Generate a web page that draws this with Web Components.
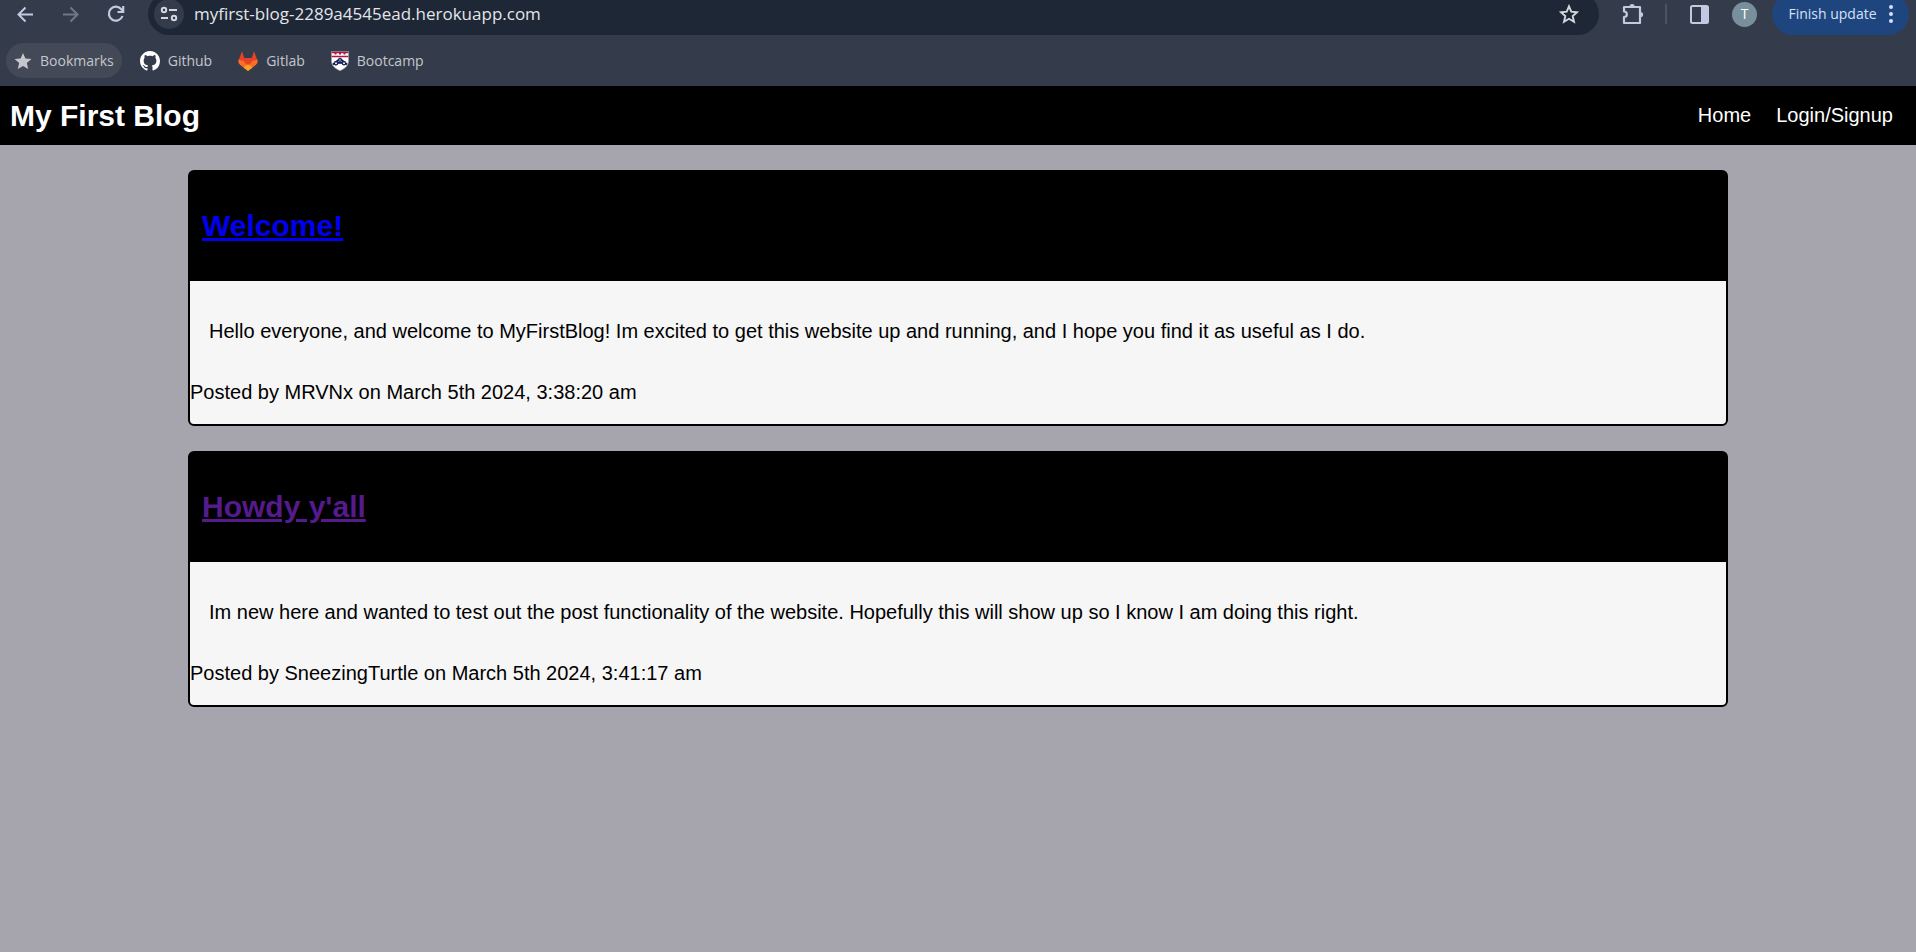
<!DOCTYPE html>
<html lang="en">
<head>
<meta charset="utf-8">
<title>My First Blog</title>
<style>
  body { margin: 0; min-height: 100vh; background: #a6a4ad; font-family: "Liberation Sans", Arial, sans-serif; font-size: 20px; line-height: 23px; color: #000; }
</style>
</head>
<body>
<browser-toolbar>
  <bookmark-link active label="Bookmarks">
    <svg slot="icon" width="18" height="18" viewBox="0 0 24 24" fill="#c4c7cb"><path d="M12 1.2l3.2 7.5 8.1.7-6.2 5.4 1.9 7.9-7-4.2-7 4.2 1.9-7.9L.7 9.400l8.100-.7z"/></svg>
  </bookmark-link>
  <bookmark-link label="Github">
    <svg slot="icon" width="20" height="20" viewBox="0 0 16 16" fill="#fff"><path d="M8 0C3.580 0 0 3.580 0 8c0 3.540 2.290 6.530 5.470 7.590.4.070.55-.17.55-.38 0-.19-.01-.82-.01-1.490-2.010.37-2.530-.49-2.690-.94-.09-.23-.48-.94-.82-1.130-.28-.15-.68-.52-.01-.53.63-.01 1.080.58 1.230.82.72 1.210 1.870.87 2.330.66.070-.52.280-.87.510-1.070-1.780-.2-3.640-.89-3.640-3.950 0-.87.310-1.590.82-2.150-.08-.2-.36-1.020.08-2.120 0 0 .67-.21 2.200.82.640-.18 1.320-.27 2-.27s1.360.09 2 .27c1.530-1.040 2.200-.82 2.200-.82.440 1.100.160 1.920.080 2.120.510.560.820 1.270.820 2.150 0 3.070-1.870 3.750-3.650 3.950.290.250.540.730.540 1.480 0 1.070-.010 1.930-.010 2.200 0 .210.150.460.550.380A8.010 8.010 0 0 0 16 8c0-4.420-3.580-8-8-8z"/></svg>
  </bookmark-link>
  <bookmark-link label="Gitlab">
    <svg slot="icon" width="20" height="20" viewBox="0 0 20 20"><path fill="#e24329" d="M4 .3L6.300 7h7.400L16 .3 19.500 9.500 10 18.500.5 9.500z"/><path fill="#fc6d26" d="M.7 8.500L6 10l4 4 4-4 5.300-1.500c.8 2 .2 4-1.500 5.400L10 19.800l-7.800-5.900C.5 12.500-.1 10.500.7 8.500z"/><path fill="#e24329" d="M5 8h10l-2 4-3 3-3-3z"/><path fill="#fca326" d="M10 13.200l4.500 3.300-4.500 3.400-4.500-3.400z"/></svg>
  </bookmark-link>
  <bookmark-link label="Bootcamp">
    <svg slot="icon" width="18" height="20" viewBox="0 0 18 20"><path fill="#fff" stroke="#8e93a3" stroke-width=".7" d="M.4.5h17.200v9c0 5-3.800 8.300-8.600 10.200C4.200 17.800.4 14.500.4 9.500z"/><path fill="#a8183f" d="M.8.8h16.400v1.400H.8zM.8 4.800h16.400v1.500H.8zM3.500 2h2v1.500h-2zM8 2h2v1.500H8zM12.500 2h2v1.500h-2z"/><path fill="none" stroke="#12205c" stroke-width="2" d="M2 13.500L9 7.800l7 5.700"/><g fill="#fff" stroke="#12205c" stroke-width="1.300"><circle cx="9" cy="9" r="1.400"/><circle cx="5" cy="12.300" r="1.600"/><circle cx="13" cy="12.300" r="1.600"/></g><path fill="#12205c" d="M7 11h4v1.800H7z"/></svg>
  </bookmark-link>
</browser-toolbar>
<blog-header heading="My First Blog">
  <a href="#home">Home</a>
  <a href="#login">Login/Signup</a>
</blog-header>
<post-list>
  <blog-post>
    <a slot="title" href="#welcome">Welcome!</a>
    Hello everyone, and welcome to MyFirstBlog! Im excited to get this website up and running, and I hope you find it as useful as I do.
    <span slot="meta">Posted by MRVNx on March 5th 2024, 3:38:20 am</span>
  </blog-post>
  <blog-post read>
    <a slot="title" href="#howdy">Howdy y'all</a>
    Im new here and wanted to test out the post functionality of the website. Hopefully this will show up so I know I am doing this right.
    <span slot="meta">Posted by SneezingTurtle on March 5th 2024, 3:41:17 am</span>
  </blog-post>
</post-list>

<template id="toolbar-template">
  <style>
    :host { display: block; background: #343c4c; color: #c2c9e0; font-family: "Open Sans", "Noto Sans", sans-serif; overflow: hidden; }
    .row { display: flex; align-items: center; height: 42px; margin-top: -7px; padding: 0 7px 0 8px; }
    button { border: 0; padding: 0; background: none; color: inherit; font: inherit; display: flex; align-items: center; justify-content: center; flex: none; width: 35px; height: 35px; }
    .nav { display: flex; gap: 10px; margin-right: 15px; }
    .nav button:disabled { color: #717785; }
    .address { flex: 1; display: flex; align-items: center; height: 42px; border-radius: 21px; background: #1e2736; padding: 0 15px 0 6px; }
    .address button { width: 30px; height: 30px; border-radius: 15px; color: #d4d7dd; }
    .address .site { background: #343c4c; }
    input { flex: 1; min-width: 0; border: 0; padding: 0; margin: 0 10px; height: 24px; background: none; color: #e3e5ea; font: 17px/24px "Open Sans", "Noto Sans", sans-serif; outline: 0; }
    .tools { display: flex; align-items: center; gap: 15px; margin-left: 16px; }
    .divider { width: 2px; height: 20px; background: #4c5361; }
    .tools .avatar { width: 25px; height: 25px; border-radius: 50%; background: #78909c; color: #fff; font-size: 14px; line-height: 20px; }
    .tools .update { width: 137px; height: 42px; border-radius: 21px; background: #1f457f; color: #d3e1fb; font-size: 14px; line-height: 20px; gap: 12px; }
    .bookmarks { display: flex; gap: 10px; padding: 8px 6px; }
  </style>
  <div class="row">
    <div class="nav">
      <button aria-label="Back"><svg width="17" height="17" viewBox="0 0 17 17" fill="none" stroke="currentColor" stroke-width="2"><path d="M16 8.500H2M8.500 1.500l-7 7 7 7"/></svg></button>
      <button aria-label="Forward" disabled><svg width="17" height="17" viewBox="0 0 17 17" fill="none" stroke="currentColor" stroke-width="2"><path d="M1 8.500h14M8.500 1.500l7 7-7 7"/></svg></button>
      <button aria-label="Reload"><svg width="18" height="18" viewBox="0 0 18 18" fill="none" stroke="currentColor" stroke-width="2.200"><path d="M15.500 11A7 7 0 1 1 14.500 4.500L16 6.300M16.200 1v6H10.500"/></svg></button>
    </div>
    <div class="address">
      <button class="site" aria-label="Site information"><svg width="18" height="16" viewBox="0 0 18 16" fill="none" stroke="currentColor" stroke-width="2"><circle cx="4" cy="4" r="2.200"/><path d="M9 4h8M1 12h7"/><circle cx="14" cy="12" r="2.200"/></svg></button>
      <input type="text" aria-label="Address" value="myfirst-blog-2289a4545ead.herokuapp.com">
      <button aria-label="Bookmark this page"><svg width="20" height="20" viewBox="0 0 20 20" fill="none" stroke="currentColor" stroke-width="1.900"><path d="M10 2.300l2.300 5.400 5.800.5-4.400 3.900 1.300 5.700-5-3-5 3 1.300-5.700-4.400-3.900 5.800-.5z"/></svg></button>
    </div>
    <div class="tools">
      <button aria-label="Extensions"><svg width="22" height="22" viewBox="0 0 22 22" fill="none" stroke="currentColor" stroke-width="2.200" stroke-linejoin="round"><path d="M2 4h16v16H2v-6c3.800 0 3.800-5.500 0-5.500z"/><path fill="currentColor" stroke="none" d="M7.500 3.500a2.600 2.600 0 0 1 5.200 0zM18.500 9a2.600 2.600 0 0 1 0 5.200z"/></svg></button>
      <span class="divider"></span>
      <button aria-label="Side panel"><svg width="19" height="19" viewBox="0 0 19 19"><rect x="1" y="1" width="17" height="17" rx="1.500" fill="none" stroke="currentColor" stroke-width="2"/><path fill="currentColor" d="M11 1h7v17h-7z"/></svg></button>
      <button class="avatar" aria-label="Profile">T</button>
      <button class="update">Finish update <svg width="4" height="18" viewBox="0 0 4 18" fill="currentColor"><circle cx="2" cy="2" r="2"/><circle cx="2" cy="9" r="2"/><circle cx="2" cy="16" r="2"/></svg></button>
    </div>
  </div>
  <nav class="bookmarks" aria-label="Bookmarks bar"><slot></slot></nav>
</template>

<template id="bookmark-template">
  <style>
    :host { display: block; }
    a { display: flex; align-items: center; gap: 8px; height: 35px; padding: 0 8px; border-radius: 18px; color: #c4c7cb; font-size: 14px; line-height: 20px; text-decoration: none; }
    :host([active]) a { background: #434957; }
    ::slotted(svg) { display: block; flex: none; }
  </style>
  <a href="#"><slot name="icon"></slot><span></span></a>
</template>

<template id="header-template">
  <style>
    :host { display: block; background: #000; color: #fff; }
    header { display: flex; align-items: center; justify-content: space-between; min-height: 59px; padding: 0 23px 0 10px; }
    h1 { margin: 0; font-size: 30px; line-height: 34px; }
    nav { display: flex; gap: 25px; }
    ::slotted(a) { color: #fff; text-decoration: none; }
  </style>
  <header><h1></h1><nav><slot></slot></nav></header>
</template>

<template id="list-template">
  <style>
    :host { display: block; }
    main { display: grid; gap: 25px; padding: 25px 188px; }
  </style>
  <main><slot></slot></main>
</template>

<template id="post-template">
  <style>
    :host { display: block; --link: #0000ee; }
    :host([read]) { --link: #551a8b; }
    article { border: 2px solid #000; border-radius: 6px; background: #f6f6f6; }
    h2 { margin: 0; padding: 37px 12px 38px; background: #000; font-size: 30px; line-height: 34px; }
    ::slotted(a) { color: var(--link); }
    p { margin: 0; padding: 39px 19px 38px; }
    footer { padding-bottom: 20px; }
  </style>
  <article><h2><slot name="title"></slot></h2><p><slot></slot></p><footer><slot name="meta"></slot></footer></article>
</template>

<script>
  class TemplateElement extends HTMLElement {
    constructor() {
      super();
      const template = document.getElementById(this.constructor.template);
      this.attachShadow({ mode: "open" }).append(template.content.cloneNode(true));
    }
  }
  class BrowserToolbar extends TemplateElement { static template = "toolbar-template"; }
  class BookmarkLink extends TemplateElement {
    static template = "bookmark-template";
    connectedCallback() { this.shadowRoot.querySelector("span").textContent = this.getAttribute("label"); }
  }
  class BlogHeader extends TemplateElement {
    static template = "header-template";
    connectedCallback() { this.shadowRoot.querySelector("h1").textContent = this.getAttribute("heading"); }
  }
  class PostList extends TemplateElement { static template = "list-template"; }
  class BlogPost extends TemplateElement { static template = "post-template"; }
  customElements.define("browser-toolbar", BrowserToolbar);
  customElements.define("bookmark-link", BookmarkLink);
  customElements.define("blog-header", BlogHeader);
  customElements.define("post-list", PostList);
  customElements.define("blog-post", BlogPost);
</script>
</body>
</html>
